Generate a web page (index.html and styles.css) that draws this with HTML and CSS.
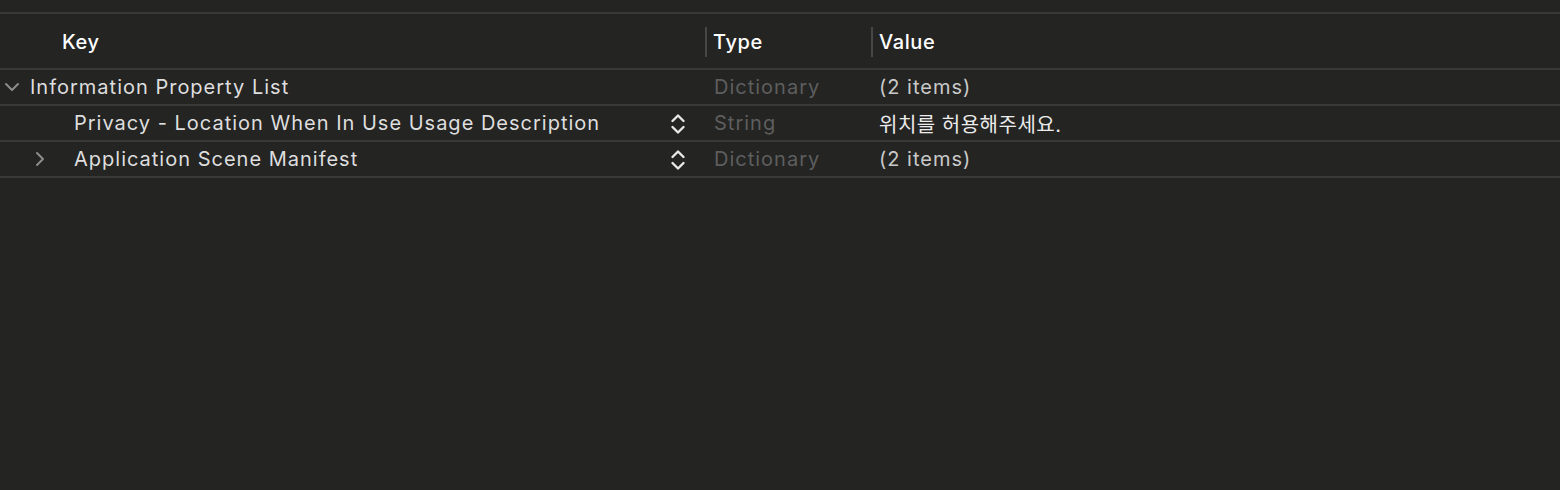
FILE: index.html
```html
<!DOCTYPE html>
<html lang="ko">
<head>
<meta charset="utf-8">
<title>Info.plist</title>
<link rel="stylesheet" href="styles.css">
</head>
<body>
<div class="editor">
  <div class="topbar"></div>
  <div class="row header">
    <div class="cell key"><span class="head-label key-label">Key</span></div>
    <div class="cell type"><span class="head-label sep">Type</span></div>
    <div class="cell value"><span class="head-label sep">Value</span></div>
  </div>
  <div class="row">
    <div class="cell key level0">
      <span class="disclosure">
        <svg width="16" height="10" viewBox="0 0 16 10"><path d="M2 2 L8 8 L14 2" fill="none" stroke="#8c8c8c" stroke-width="2" stroke-linecap="round" stroke-linejoin="round"/></svg>
      </span>
      <span class="key-text">Information Property List</span>
    </div>
    <div class="cell type dim">Dictionary</div>
    <div class="cell value">(2 items)</div>
  </div>
  <div class="row">
    <div class="cell key level1">
      <span class="disclosure"></span>
      <span class="key-text">Privacy - Location When In Use Usage Description</span>
      <span class="stepper">
        <svg width="18" height="24" viewBox="0 0 18 24"><path d="M3.5 9 L9 3.5 L14.5 9 M3.5 15 L9 20.5 L14.5 15" fill="none" stroke="#e8e8e8" stroke-width="2.4" stroke-linecap="round" stroke-linejoin="round"/></svg>
      </span>
    </div>
    <div class="cell type dim">String</div>
    <div class="cell value bright">위치를 허용해주세요.</div>
  </div>
  <div class="row">
    <div class="cell key level1">
      <span class="disclosure">
        <svg width="10" height="16" viewBox="0 0 10 16"><path d="M2 2 L8 8 L2 14" fill="none" stroke="#8c8c8c" stroke-width="2" stroke-linecap="round" stroke-linejoin="round"/></svg>
      </span>
      <span class="key-text">Application Scene Manifest</span>
      <span class="stepper">
        <svg width="18" height="24" viewBox="0 0 18 24"><path d="M3.5 9 L9 3.5 L14.5 9 M3.5 15 L9 20.5 L14.5 15" fill="none" stroke="#e8e8e8" stroke-width="2.4" stroke-linecap="round" stroke-linejoin="round"/></svg>
      </span>
    </div>
    <div class="cell type dim">Dictionary</div>
    <div class="cell value">(2 items)</div>
  </div>
</div>
</body>
</html>
```

FILE: styles.css
```css
html, body {
  margin: 0;
  padding: 0;
  background: #242423;
  height: 100%;
}

body {
  font-family: Inter, "Noto Sans CJK KR", "Noto Sans", sans-serif;
  font-size: 20px;
  letter-spacing: 1px;
  color: #dedede;
}

.editor {
  width: 1560px;
}

.topbar {
  height: 12px;
  border-bottom: 2px solid #393939;
}

.row {
  display: grid;
  grid-template-columns: 705px 166px 1fr;
  height: 34px;
  border-bottom: 2px solid #393939;
  align-items: center;
}

.row.header {
  height: 54px;
}

.header .cell {
  padding-top: 2px;
  box-sizing: border-box;
}

.cell {
  display: flex;
  align-items: center;
  height: 100%;
  white-space: nowrap;
}

.header .cell {
  color: #ffffff;
  font-weight: 500;
  letter-spacing: 0.6px;
}

.key-label {
  padding-left: 62px;
}

.head-label.sep {
  display: flex;
  align-items: center;
  height: 30px;
  border-left: 2px solid #474747;
  padding-left: 6px;
}

.type {
  padding-left: 9px;
}

.header .type,
.header .value {
  padding-left: 0;
}

.value {
  padding-left: 8px;
  color: #c9c9c9;
}

.value.bright {
  color: #ececec;
  letter-spacing: 0.5px;
}

.dim {
  color: #5e5e5e;
}

.key {
  padding-right: 18px;
  box-sizing: border-box;
}

.disclosure {
  display: flex;
  align-items: center;
  justify-content: center;
}

.level0 .disclosure {
  width: 16px;
  margin-left: 4px;
  margin-right: 10px;
}

.level1 .disclosure {
  width: 10px;
  margin-left: 35px;
  margin-right: 29px;
}

.key-text {
  flex: 1;
  color: #dedede;
}

.stepper {
  display: flex;
  align-items: center;
  padding-top: 1px;
}
```
